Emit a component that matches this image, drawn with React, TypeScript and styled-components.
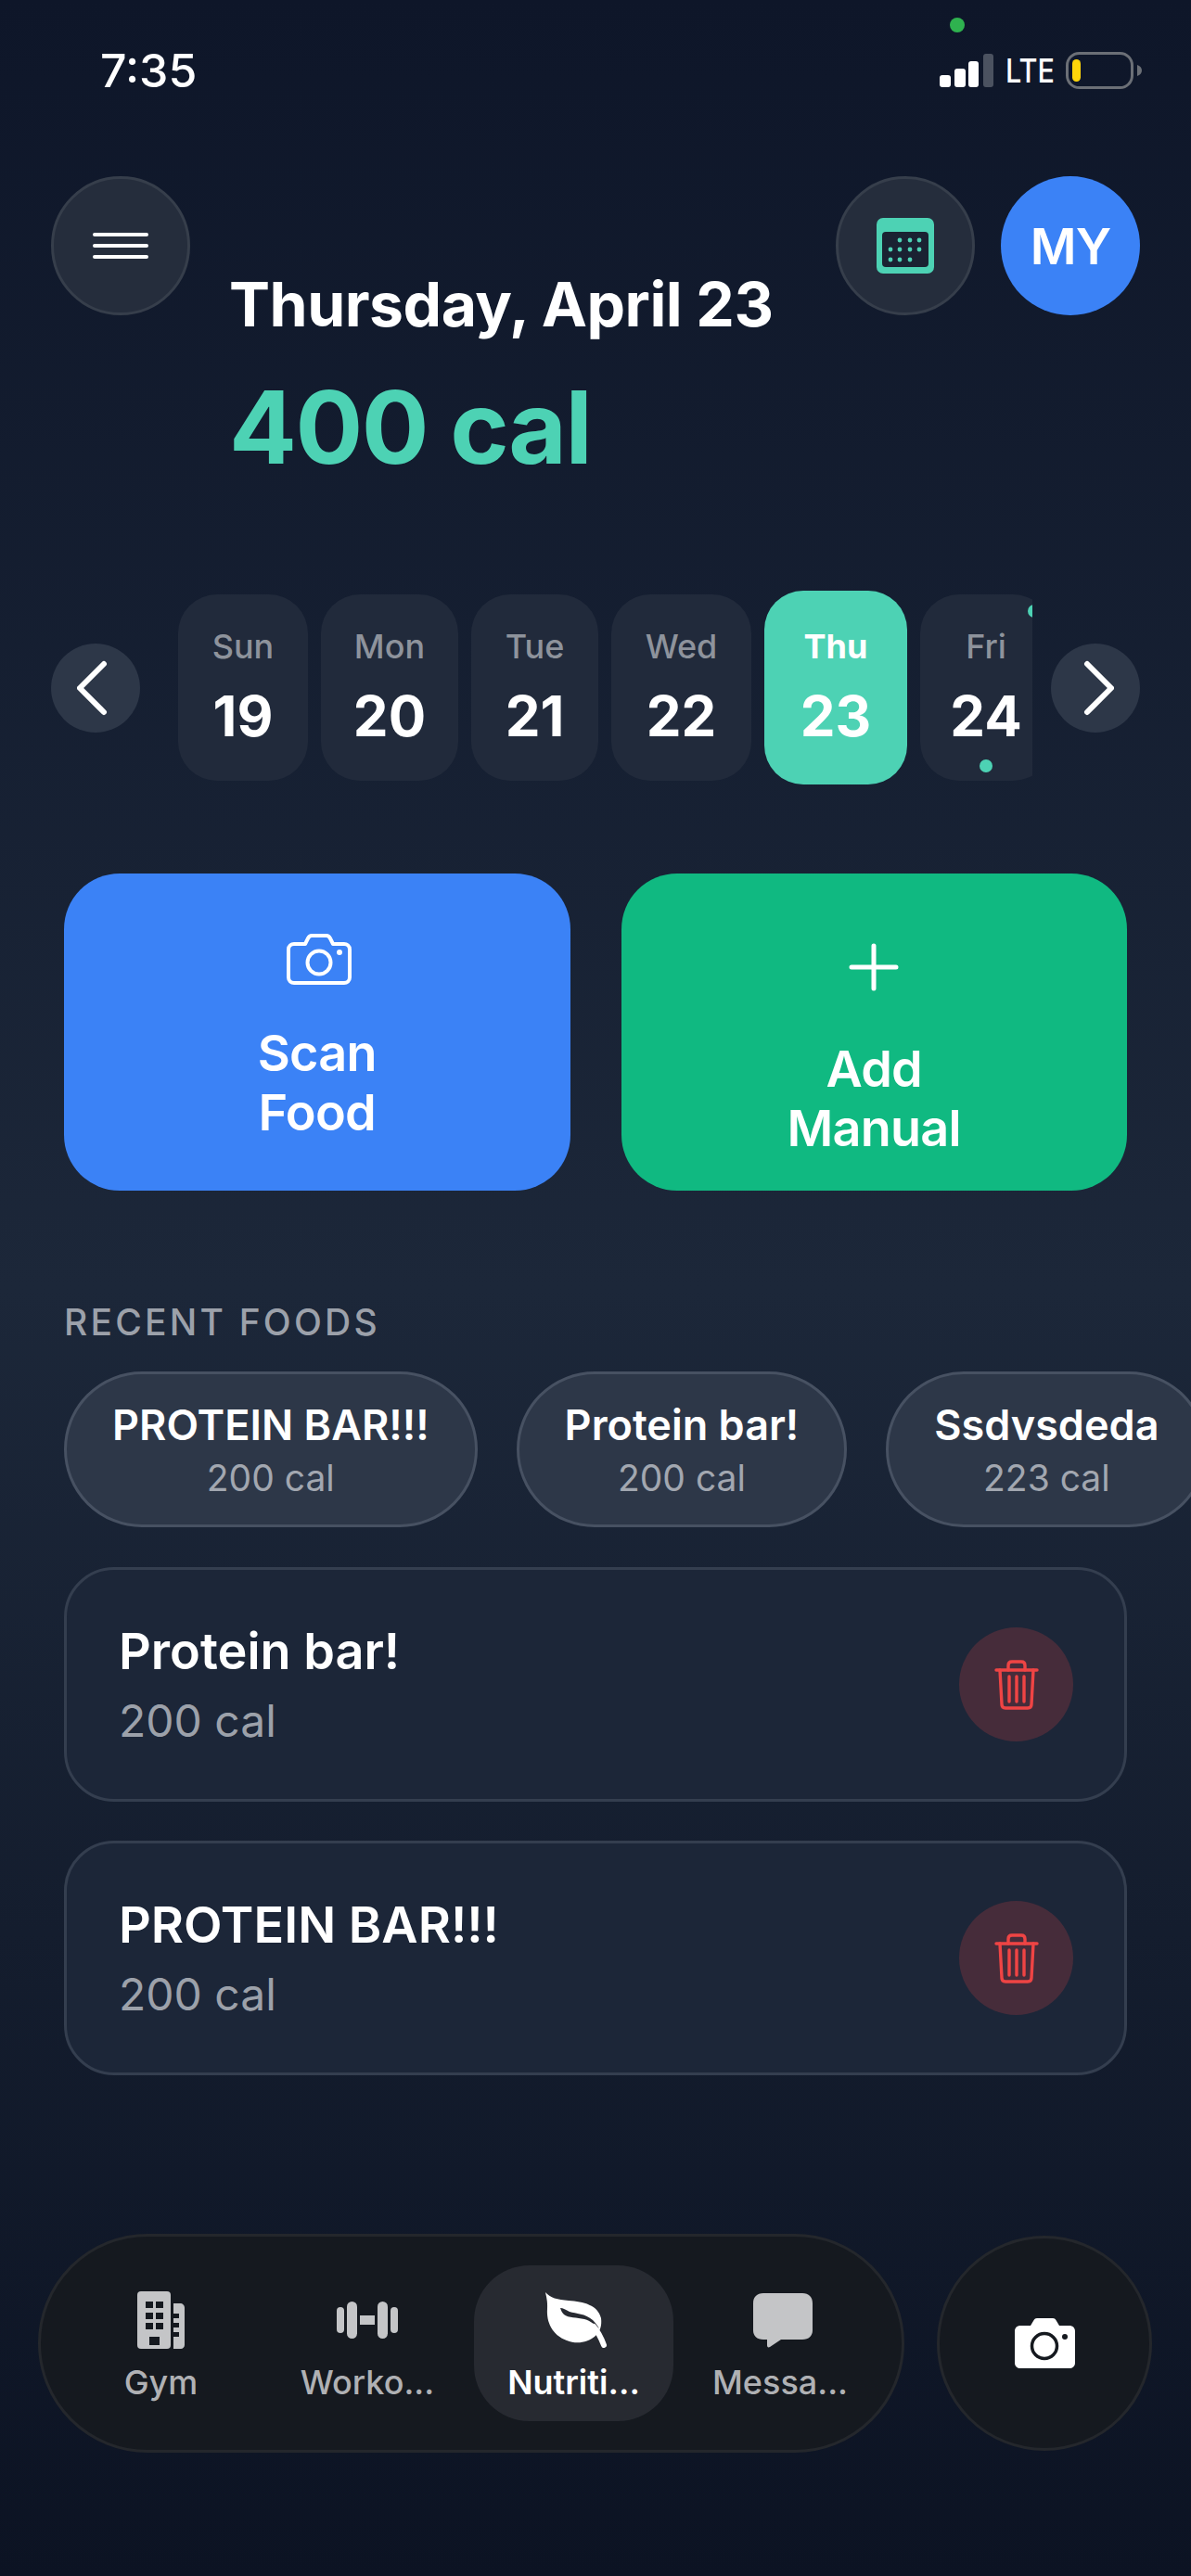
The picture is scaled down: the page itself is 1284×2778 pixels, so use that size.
import styled, { createGlobalStyle } from 'styled-components'

const GlobalStyle = createGlobalStyle`
  html, body {
    margin: 0;
    padding: 0;
    background: #0d1424;
  }
  * {
    box-sizing: border-box;
  }
`

const days = [
  { name: 'Sun', num: 19, width: 140 },
  { name: 'Mon', num: 20, width: 148 },
  { name: 'Tue', num: 21, width: 137 },
  { name: 'Wed', num: 22, width: 151 },
  { name: 'Thu', num: 23, width: 154, active: true },
  { name: 'Fri', num: 24, width: 142, marked: true },
]

const recents = [
  { name: 'PROTEIN BAR!!!', cal: '200 cal' },
  { name: 'Protein bar!', cal: '200 cal' },
  { name: 'Ssdvsdeda', cal: '223 cal' },
]

const meals = [
  { name: 'Protein bar!', cal: '200 cal' },
  { name: 'PROTEIN BAR!!!', cal: '200 cal' },
]

const Page = styled.div`
  width: 1284px;
  min-height: 2778px;
  display: flex;
  flex-direction: column;
  overflow: hidden;
  position: relative;
  font-family: Inter, "Liberation Sans", sans-serif;
  color: #fff;
  background: linear-gradient(180deg, #0e1629 0%, #1c2739 50%, #0c1323 100%);
`

const StatusBar = styled.div`
  height: 190px;
  padding: 46px 53px 0 108px;
  display: flex;
  align-items: flex-start;
  justify-content: space-between;
`

const Time = styled.div`
  font-size: 50px;
  line-height: 60px;
  font-weight: 500;
`

const GreenDot = styled.div`
  position: absolute;
  left: 1024px;
  top: 19px;
  width: 16px;
  height: 16px;
  border-radius: 50%;
  background: #2fb24f;
`

const StatusIcons = styled.div`
  height: 60px;
  display: flex;
  align-items: center;
  gap: 13px;
`

const Lte = styled.div`
  width: 52px;
  font-size: 36px;
  line-height: 60px;
  font-weight: 500;
  transform: scaleX(0.85);
  transform-origin: left center;
`

const Header = styled.div`
  padding: 0 55px;
  display: flex;
  align-items: flex-start;
`

const RoundButton = styled.div`
  width: 150px;
  height: 150px;
  flex-shrink: 0;
  border-radius: 50%;
  background: #252d3c;
  border: 3px solid #363e4b;
  display: flex;
  align-items: center;
  justify-content: center;
`

const Titles = styled.div`
  margin-left: 42px;
  padding-top: 98px;
  display: flex;
  flex-direction: column;
  gap: 28px;
`

const DateTitle = styled.div`
  font-size: 66px;
  line-height: 80px;
  font-weight: 700;
  letter-spacing: -0.5px;
  white-space: nowrap;
`

const Calories = styled.div`
  font-size: 108px;
  line-height: 130px;
  font-weight: 700;
  letter-spacing: -1.5px;
  color: #4dd2b4;
`

const HeaderActions = styled.div`
  margin-left: auto;
  display: flex;
  gap: 28px;
`

const Avatar = styled.div`
  width: 150px;
  height: 150px;
  border-radius: 50%;
  background: #3b82f6;
  display: flex;
  align-items: center;
  justify-content: center;
  font-size: 54px;
  font-weight: 600;
  letter-spacing: -1px;
`

const DateRow = styled.div`
  margin-top: 111px;
  padding: 0 55px;
  display: flex;
  align-items: center;
`

const ArrowButton = styled.div`
  width: 96px;
  height: 96px;
  flex-shrink: 0;
  border-radius: 50%;
  background: #2d3748;
  display: flex;
  align-items: center;
  justify-content: center;
`

const DayStrip = styled.div`
  width: 921px;
  height: 209px;
  margin: 0 auto 0 41px;
  position: relative;
  overflow: hidden;
  display: flex;
  align-items: center;
  gap: 14px;
`

const DayCard = styled.div<{ $active?: boolean }>`
  height: ${p => (p.$active ? 209 : 201)}px;
  flex-shrink: 0;
  position: relative;
  border-radius: 42px;
  background: ${p => (p.$active ? '#4dd2b4' : '#212a3b')};
  display: flex;
  flex-direction: column;
  align-items: center;
  justify-content: center;
  gap: 17px;
`

const DayName = styled.div<{ $active?: boolean }>`
  font-size: 36px;
  line-height: 44px;
  font-weight: ${p => (p.$active ? 700 : 500)};
  color: ${p => (p.$active ? '#fff' : '#8e939c')};
`

const DayNumber = styled.div`
  font-size: 60px;
  line-height: 72px;
  font-weight: 650;
`

const DayDot = styled.div`
  position: absolute;
  left: 50%;
  bottom: 9px;
  width: 14px;
  height: 14px;
  margin-left: -7px;
  border-radius: 50%;
  background: #4dd2b4;
`

const CornerDot = styled.div`
  position: absolute;
  right: -9px;
  top: 15px;
  width: 14px;
  height: 14px;
  border-radius: 50%;
  background: #4dd2b4;
`

const Actions = styled.div`
  margin-top: 96px;
  padding: 0 69px;
  display: flex;
  gap: 55px;
`

const ActionCard = styled.div<{ $color: string }>`
  width: 546px;
  height: 342px;
  padding-top: 65px;
  border-radius: 60px;
  background: ${p => p.$color};
  display: flex;
  flex-direction: column;
  align-items: center;
  gap: 42px;
`

const ActionLabel = styled.div`
  font-size: 54px;
  line-height: 64px;
  font-weight: 600;
  letter-spacing: -0.8px;
  text-align: center;
`

const SectionLabel = styled.div`
  margin-top: 118px;
  padding-left: 69px;
  font-size: 39px;
  line-height: 48px;
  font-weight: 500;
  letter-spacing: 3.2px;
  color: #9ca1aa;
`

const ChipRow = styled.div`
  margin-top: 29px;
  padding-left: 69px;
  display: flex;
  gap: 42px;
`

const Chip = styled.div`
  height: 168px;
  padding: 0 49px;
  flex-shrink: 0;
  border-radius: 84px;
  background: #2d3748;
  border: 3px solid #475162;
  display: flex;
  flex-direction: column;
  align-items: center;
  justify-content: center;
  gap: 9px;
`

const ChipName = styled.div`
  font-size: 45px;
  line-height: 52px;
  font-weight: 600;
  white-space: nowrap;
`

const ChipCal = styled.div`
  font-size: 39px;
  line-height: 44px;
  color: #a2a7b0;
`

const MealList = styled.div`
  margin-top: 43px;
  padding: 0 69px;
  display: flex;
  flex-direction: column;
  gap: 42px;
`

const MealCard = styled.div`
  height: 253px;
  padding: 0 55px 0 56px;
  border-radius: 54px;
  background: #1c2638;
  border: 3px solid #343e4f;
  display: flex;
  align-items: center;
  justify-content: space-between;
`

const MealText = styled.div`
  display: flex;
  flex-direction: column;
  gap: 15px;
`

const MealName = styled.div`
  font-size: 54px;
  line-height: 64px;
  font-weight: 600;
`

const MealCal = styled.div`
  font-size: 48px;
  line-height: 56px;
  color: #9ca1aa;
`

const DeleteButton = styled.div`
  width: 123px;
  height: 123px;
  border-radius: 50%;
  background: rgba(239, 68, 68, 0.2);
  display: flex;
  align-items: center;
  justify-content: center;
`

const BottomArea = styled.div`
  margin-top: auto;
  padding: 0 42px 133px 41px;
  display: flex;
  align-items: center;
  justify-content: space-between;
`

const TabBar = styled.div`
  width: 934px;
  height: 236px;
  padding: 0 22px;
  border-radius: 118px;
  background: #15191f;
  border: 3px solid #24272c;
  display: flex;
  align-items: center;
  gap: 7.5px;
`

const Tab = styled.div<{ $active?: boolean }>`
  width: 215px;
  height: 168px;
  border-radius: 60px;
  background: ${p => (p.$active ? '#272a31' : 'transparent')};
  display: flex;
  flex-direction: column;
  align-items: center;
`

const TabIcon = styled.div`
  height: 90px;
  margin-top: 14px;
  display: flex;
  align-items: center;
`

const TabLabel = styled.div<{ $active?: boolean }>`
  font-size: 36px;
  line-height: 44px;
  font-weight: ${p => (p.$active ? 600 : 500)};
  white-space: nowrap;
  color: ${p => (p.$active ? '#fff' : '#b0b1b4')};
`

const CameraButton = styled.div`
  width: 232px;
  height: 232px;
  border-radius: 50%;
  background: #15191f;
  border: 3px solid #24272c;
  display: flex;
  align-items: center;
  justify-content: center;
`

const SignalIcon = () => (
  <svg width="58" height="36" viewBox="0 0 58 36">
    <rect x="0" y="23" width="12" height="13" rx="3" fill="#fff" />
    <rect x="16" y="16" width="12" height="20" rx="3" fill="#fff" />
    <rect x="31" y="8" width="11" height="28" rx="3" fill="#fff" />
    <rect x="47" y="0" width="11" height="36" rx="3" fill="#4b5260" />
  </svg>
)

const BatteryIcon = () => (
  <svg width="82" height="40" viewBox="0 0 82 40">
    <rect x="1.5" y="1.5" width="70" height="37" rx="13" fill="none" stroke="#6b6f76" strokeWidth="3" />
    <rect x="7" y="8" width="9" height="24" rx="4.5" fill="#ffd60a" />
    <path d="M77 14 C80 15 82 17 82 20 C82 23 80 25 77 26 Z" fill="#6b6f76" />
  </svg>
)

const MenuIcon = () => (
  <svg width="60" height="34" viewBox="0 0 60 34">
    <path d="M2 5 H58 M2 17 H58 M2 29 H58" stroke="#fff" strokeWidth="4" strokeLinecap="round" />
  </svg>
)

const CalendarIcon = () => {
  const dots = [
    [970, 260], [981, 260], [991, 260],
    [960, 270], [970, 270], [981, 270], [991, 270],
    [960, 281], [970, 281], [981, 281],
  ]
  return (
    <svg width="62" height="60" viewBox="945 236 62 60">
      <rect x="945" y="236" width="62" height="60" rx="7" fill="#4dd2b4" />
      <rect x="951" y="251" width="50" height="38" rx="4" fill="#1a2232" />
      {dots.map(([cx, cy]) => (
        <circle key={`${cx}-${cy}`} cx={cx} cy={cy} r="2.4" fill="#4dd2b4" />
      ))}
    </svg>
  )
}

const Chevron = ({ back }: { back?: boolean }) => (
  <svg width="40" height="64" viewBox="0 0 40 64">
    <path
      d={back ? 'M29 6 L3 32 L29 58' : 'M11 6 L37 32 L11 58'}
      fill="none"
      stroke="#fff"
      strokeWidth="6"
      strokeLinecap="round"
      strokeLinejoin="round"
    />
  </svg>
)

const CameraOutline = () => (
  <svg width="74" height="55" viewBox="-4 0 74 55">
    <path
      d="M8 11 H20 L23 5 C24 3 25 2 27 2 H43 C45 2 46 3 47 5 L50 11 H62 C65 11 68 13 68 17 V47 C68 51 65 53 62 53 H8 C5 53 2 51 2 47 V17 C2 13 5 11 8 11 Z"
      fill="none"
      stroke="#fff"
      strokeWidth="4"
      strokeLinejoin="round"
    />
    <circle cx="35" cy="31" r="12.5" fill="none" stroke="#fff" strokeWidth="4" />
    <circle cx="57" cy="20" r="3" fill="#fff" />
  </svg>
)

const PlusIcon = () => (
  <svg width="72" height="72" viewBox="0 0 72 72">
    <path d="M36 13 V59 M12 36 H60" stroke="#fff" strokeWidth="5" strokeLinecap="round" />
  </svg>
)

const TrashIcon = () => (
  <svg width="48" height="54" viewBox="0 0 48 54" fill="none" stroke="#ef4444" strokeWidth="3.4" strokeLinecap="round" strokeLinejoin="round">
    <path d="M2 11 H46" />
    <path d="M15 11 V6 C15 3 17 2 19 2 H29 C31 2 33 3 33 6 V11" />
    <path d="M6 11 L8 48 C8 51 10 52 12 52 H36 C38 52 40 51 40 48 L42 11" />
    <path d="M16 18 V45 M24 18 V45 M32 18 V45" />
  </svg>
)

const BuildingIcon = () => (
  <svg width="51" height="62" viewBox="0 0 51 62">
    <rect x="0" y="0" width="36" height="62" rx="4" fill="#c4c5c7" />
    <path d="M39 13 H46 C49 13 51 15 51 18 V58 C51 60 49 62 47 62 H39 Z" fill="#c4c5c7" />
    <g fill="#15191f">
      <rect x="9" y="11" width="8" height="7" />
      <rect x="20" y="11" width="8" height="7" />
      <rect x="9" y="23" width="8" height="7" />
      <rect x="20" y="23" width="8" height="7" />
      <rect x="9" y="34" width="8" height="7" />
      <rect x="20" y="34" width="8" height="7" />
      <rect x="13" y="49" width="11" height="9" />
      <rect x="39" y="24" width="6" height="5" />
      <rect x="39" y="34" width="6" height="5" />
      <rect x="39" y="44" width="6" height="5" />
    </g>
  </svg>
)

const DumbbellIcon = () => (
  <svg width="66" height="40" viewBox="0 0 66 40" fill="#c4c5c7">
    <rect x="0" y="6" width="8" height="28" rx="4" />
    <rect x="11" y="0" width="11" height="40" rx="5.5" />
    <rect x="25" y="15" width="16" height="10" />
    <rect x="44" y="0" width="11" height="40" rx="5.5" />
    <rect x="58" y="6" width="8" height="28" rx="4" />
  </svg>
)

const LeafIcon = () => (
  <svg width="72" height="60" viewBox="-4 0 72 60">
    <path
      d="M1 0 C6 6 14 8 26 9 C42 10 58 14 61 28 C62 36 60 42 55 47 C46 55 34 56 24 52 C8 46 2 32 3 18 C3.5 10 2 5 1 0 Z"
      fill="#fff"
    />
    <path d="M17 17 C20 17 23 19 27 21 C34 23 44 23 52 30 C55 33 57 36 59 39 C54 35 50 31 43 29 C35 27 26 28 21 24 C19 22 18 20 17 17 Z" fill="#272a31" />
    <path d="M53 37 C58 43 61 49 64 57" fill="none" stroke="#fff" strokeWidth="6" strokeLinecap="round" />
  </svg>
)

const ChatIcon = () => (
  <svg width="70" height="59" viewBox="-6 0 70 59">
    <path
      d="M11 0 H53 C60 0 64 4 64 11 V40 C64 46 60 50 53 50 H30 L18 58 C16 59 15 58 15 56 V50 H11 C4 50 0 46 0 40 V11 C0 4 4 0 11 0 Z"
      fill="#c4c5c7"
    />
  </svg>
)

const CameraFilled = () => (
  <svg width="65" height="54" viewBox="0 0 65 54">
    <path
      d="M6 8 H17 L20 3 C21 1 22 0 24 0 H41 C43 0 44 1 45 3 L48 8 H59 C62 8 65 10 65 14 V48 C65 52 62 54 59 54 H6 C3 54 0 52 0 48 V14 C0 10 3 8 6 8 Z"
      fill="#fff"
    />
    <circle cx="32" cy="30" r="13.5" fill="#fff" stroke="#15191f" strokeWidth="3.5" />
    <circle cx="54" cy="20" r="3" fill="#15191f" />
  </svg>
)

const tabs = [
  { label: 'Gym', icon: <BuildingIcon /> },
  { label: 'Worko...', icon: <DumbbellIcon /> },
  { label: 'Nutriti...', icon: <LeafIcon />, active: true },
  { label: 'Messa...', icon: <ChatIcon /> },
]

export default function App() {
  return (
    <>
      <GlobalStyle />
      <Page>
        <GreenDot />
        <StatusBar>
          <Time>7:35</Time>
          <StatusIcons>
            <SignalIcon />
            <Lte>LTE</Lte>
            <BatteryIcon />
          </StatusIcons>
        </StatusBar>

        <Header>
          <RoundButton>
            <MenuIcon />
          </RoundButton>
          <Titles>
            <DateTitle>Thursday, April 23</DateTitle>
            <Calories>400 cal</Calories>
          </Titles>
          <HeaderActions>
            <RoundButton>
              <CalendarIcon />
            </RoundButton>
            <Avatar>MY</Avatar>
          </HeaderActions>
        </Header>

        <DateRow>
          <ArrowButton>
            <Chevron back />
          </ArrowButton>
          <DayStrip>
            {days.map(d => (
              <DayCard key={d.name} $active={d.active} style={{ width: d.width }}>
                <DayName $active={d.active}>{d.name}</DayName>
                <DayNumber>{d.num}</DayNumber>
                {d.marked && <DayDot />}
              </DayCard>
            ))}
            <CornerDot />
          </DayStrip>
          <ArrowButton>
            <Chevron />
          </ArrowButton>
        </DateRow>

        <Actions>
          <ActionCard $color="#3b82f6">
            <CameraOutline />
            <ActionLabel>
              Scan
              <br />
              Food
            </ActionLabel>
          </ActionCard>
          <ActionCard $color="#10b981">
            <PlusIcon />
            <ActionLabel>
              Add
              <br />
              Manual
            </ActionLabel>
          </ActionCard>
        </Actions>

        <SectionLabel>RECENT FOODS</SectionLabel>
        <ChipRow>
          {recents.map(r => (
            <Chip key={r.name}>
              <ChipName>{r.name}</ChipName>
              <ChipCal>{r.cal}</ChipCal>
            </Chip>
          ))}
        </ChipRow>

        <MealList>
          {meals.map(m => (
            <MealCard key={m.name}>
              <MealText>
                <MealName>{m.name}</MealName>
                <MealCal>{m.cal}</MealCal>
              </MealText>
              <DeleteButton>
                <TrashIcon />
              </DeleteButton>
            </MealCard>
          ))}
        </MealList>

        <BottomArea>
          <TabBar>
            {tabs.map(t => (
              <Tab key={t.label} $active={t.active}>
                <TabIcon>{t.icon}</TabIcon>
                <TabLabel $active={t.active}>{t.label}</TabLabel>
              </Tab>
            ))}
          </TabBar>
          <CameraButton>
            <CameraFilled />
          </CameraButton>
        </BottomArea>
      </Page>
    </>
  )
}
